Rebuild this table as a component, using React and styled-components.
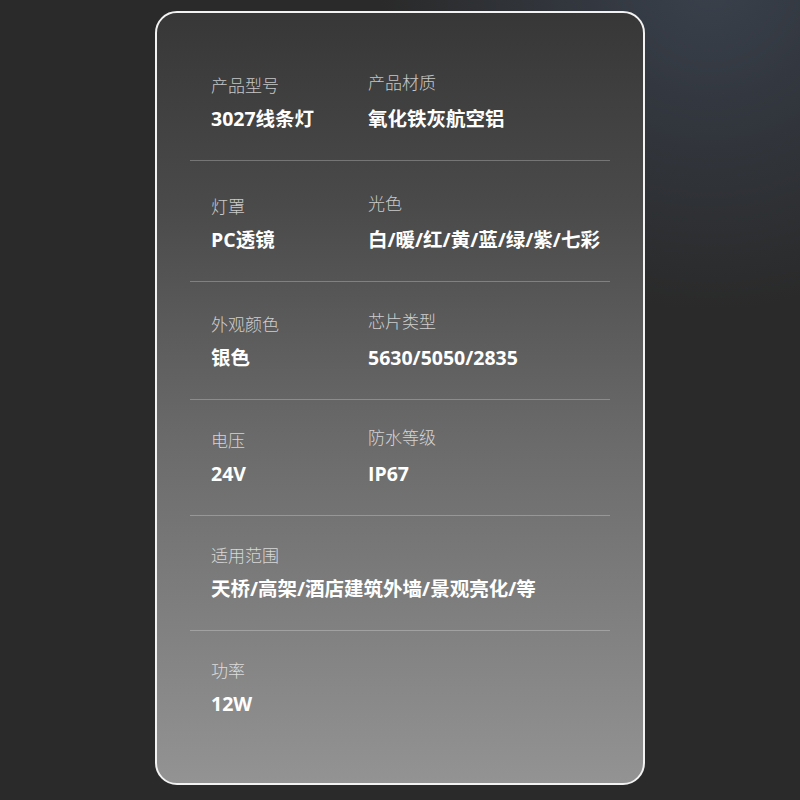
import React from "react";
import styled, { createGlobalStyle } from "styled-components";

const GlobalStyle = createGlobalStyle`
  html, body {
    margin: 0;
    padding: 0;
    background: #2a2a2a;
  }
  body {
    font-family: "Open Sans", "Noto Sans CJK SC", sans-serif;
  }
`;

const Page = styled.div`
  width: 800px;
  height: 800px;
  box-sizing: border-box;
  padding-top: 11px;
  display: flex;
  justify-content: center;
  align-items: flex-start;
  background:
    radial-gradient(circle at 710px -20px, #3a414c 0px, #333840 120px, rgba(42, 42, 42, 0) 330px),
    #2a2a2a;
`;

const Card = styled.div`
  width: 490px;
  height: 774px;
  box-sizing: border-box;
  border: 2px solid #f2f2f2;
  border-radius: 22px;
  background: linear-gradient(180deg, #373737 0%, #4a4a4a 25%, #6a6a6a 55%, #939393 100%);
  padding: 27px 33px 0;
`;

const Row = styled.div`
  display: grid;
  grid-template-columns: 157px 1fr;
  padding: ${(p) => p.$top}px 0 28px 21px;
  border-bottom: ${(p) => (p.$last ? "none" : "1px solid rgba(255, 255, 255, 0.26)")};
`;

const Field = styled.div`
  display: flex;
  flex-direction: column;
  gap: 9px;
`;

const Label = styled.div`
  font-size: 17px;
  line-height: 22px;
  font-weight: 300;
  color: rgba(255, 255, 255, 0.72);
  margin-top: ${(p) => (p.$raise ? "-3px" : "0")};
  margin-bottom: ${(p) => (p.$raise ? "3px" : "0")};
  white-space: nowrap;
`;

const Value = styled.div`
  font-size: 19.5px;
  line-height: 26px;
  font-weight: 700;
  color: #ffffff;
  white-space: nowrap;
`;

const rows = [
  {
    top: 35,
    fields: [
      ["产品型号", "3027线条灯"],
      ["产品材质", "氧化铁灰航空铝"],
    ],
  },
  {
    top: 35,
    fields: [
      ["灯罩", "PC透镜"],
      ["光色", "白/暖/红/黄/蓝/绿/紫/七彩"],
    ],
  },
  {
    top: 32,
    fields: [
      ["外观颜色", "银色"],
      ["芯片类型", "5630/5050/2835"],
    ],
  },
  {
    top: 30,
    fields: [
      ["电压", "24V"],
      ["防水等级", "IP67"],
    ],
  },
  { top: 29, fields: [["适用范围", "天桥/高架/酒店建筑外墙/景观亮化/等"]] },
  { top: 29, fields: [["功率", "12W"]] },
];

export default function App() {
  return (
    <>
      <GlobalStyle />
      <Page>
        <Card>
          {rows.map((row, i) => (
            <Row key={i} $top={row.top} $last={i === rows.length - 1}>
              {row.fields.map(([label, value], j) => (
                <Field key={label}>
                  <Label $raise={j === 1}>{label}</Label>
                  <Value>{value}</Value>
                </Field>
              ))}
            </Row>
          ))}
        </Card>
      </Page>
    </>
  );
}
